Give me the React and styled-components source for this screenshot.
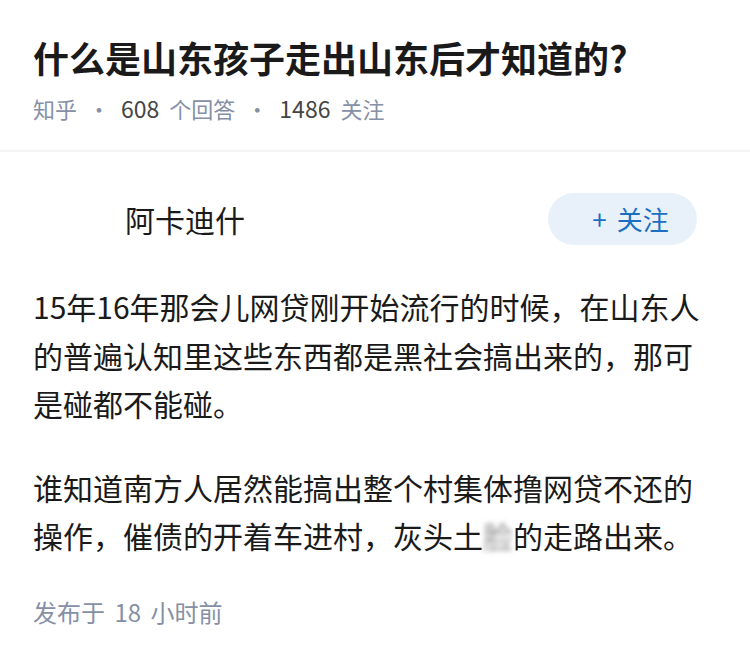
import React from "react";
import styled, { createGlobalStyle } from "styled-components";

const GlobalStyle = createGlobalStyle`
  html, body {
    margin: 0;
    padding: 0;
    background: #fff;
  }
  body {
    font-family: "Noto Sans CJK SC", "Noto Sans", sans-serif;
    color: #1a1a1a;
  }
`;

const Page = styled.div`
  width: 750px;
  background: #fff;
`;

const Header = styled.header`
  padding: 33px 33px 26px;
  border-bottom: 2px solid #f3f3f3;
`;

const Title = styled.h1`
  margin: 0;
  font-size: 36px;
  line-height: 48px;
  font-weight: 700;
  color: #1a1a1a;
`;

const Meta = styled.div`
  display: flex;
  align-items: center;
  margin-top: 11px;
  font-size: 22px;
  line-height: 32px;
  color: #8590a6;
`;

const Num = styled.span`
  color: #444;
  font-size: 23px;
  margin-right: 10px;
`;

const Dot = styled.span`
  margin: 0 11px;
`;

const Main = styled.main`
  padding: 41px 33px 0;
`;

const AuthorRow = styled.div`
  display: flex;
  align-items: center;
`;

const Avatar = styled.div`
  width: 72px;
  height: 52px;
  margin-right: 20px;
  flex-shrink: 0;
`;

const Name = styled.div`
  flex: 1;
  font-size: 30px;
  line-height: 40px;
  color: #1a1a1a;
`;

const FollowButton = styled.button`
  display: flex;
  align-items: center;
  justify-content: center;
  gap: 10px;
  width: 149px;
  height: 52px;
  margin-right: 20px;
  padding: 0 0 0 16px;
  border: none;
  border-radius: 26px;
  background: #e8f1fa;
  color: #1b6fc2;
  font-family: inherit;
  font-size: 26px;
  line-height: 1;
  cursor: pointer;
`;

const Plus = styled.span`
  font-size: 26px;
`;

const Body = styled.div`
  margin-top: 37px;
`;

const Para = styled.p`
  margin: 0;
  font-size: 30px;
  line-height: 48.5px;
  color: #1a1a1a;

  & + & {
    margin-top: 35px;
  }
`;

const Masked = styled.span`
  color: transparent;
  text-shadow: 0 0 5px rgba(60, 60, 60, 0.55);
`;

const Footer = styled.div`
  margin-top: 35px;
  font-size: 24px;
  line-height: 34px;
  color: #8590a6;
  word-spacing: 4px;
`;

export default function App() {
  return (
    <Page>
      <GlobalStyle />
      <Header>
        <Title>什么是山东孩子走出山东后才知道的?</Title>
        <Meta>
          <span>知乎</span>
          <Dot>·</Dot>
          <Num>608</Num>
          <span>个回答</span>
          <Dot>·</Dot>
          <Num>1486</Num>
          <span>关注</span>
        </Meta>
      </Header>
      <Main>
        <AuthorRow>
          <Avatar />
          <Name>阿卡迪什</Name>
          <FollowButton>
            <Plus>+</Plus>
            <span>关注</span>
          </FollowButton>
        </AuthorRow>
        <Body>
          <Para>
            15年16年那会儿网贷刚开始流行的时候，在山东人的普遍认知里这些东西都是黑社会搞出来的，那可是碰都不能碰。
          </Para>
          <Para>
            谁知道南方人居然能搞出整个村集体撸网贷不还的操作，催债的开着车进村，灰头土<Masked>脸</Masked>的走路出来。
          </Para>
        </Body>
        <Footer>发布于 18 小时前</Footer>
      </Main>
    </Page>
  );
}
